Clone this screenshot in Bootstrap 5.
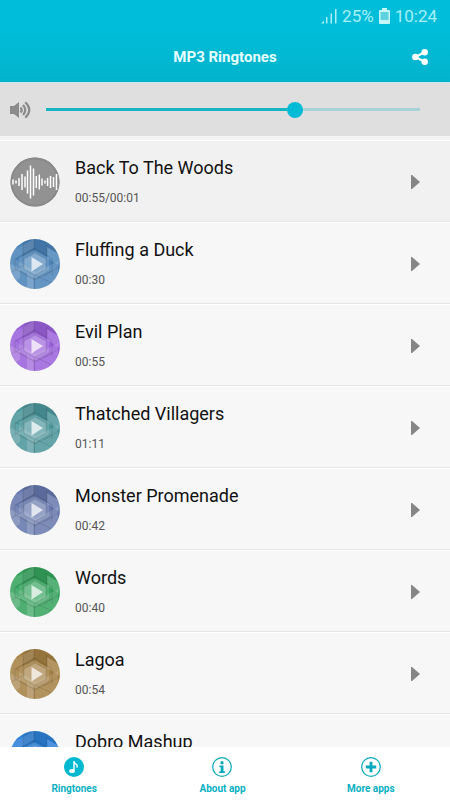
<!DOCTYPE html>
<html lang="en">
<head>
<meta charset="utf-8">
<meta name="viewport" content="width=device-width, initial-scale=1">
<title>MP3 Ringtones</title>
<link href="https://cdn.jsdelivr.net/npm/bootstrap@5.3.0/dist/css/bootstrap.min.css" rel="stylesheet">
<style>
  body { font-family: Roboto, "Liberation Sans", sans-serif; background: #f7f7f7; }
  .app-top { background: linear-gradient(#00bed9 30%, #03b3cc); color: #fff; border-bottom: 1px solid #c4e6ec; }
  .status { height: 32px; font-size: 17px; line-height: 32px; color: #a9f0f7; padding-right: 13px; gap: 5px; }
  .title-bar { height: 50px; }
  .title-bar h1 { font-size: 15px; line-height: 20px; font-weight: 700; color: #e6ffff; }
  .side { width: 60px; }
  .volume { background: #dfdfdf; height: 53px; padding: 0 30px 0 10px; gap: 14px; }
  .volume-range { appearance: none; -webkit-appearance: none; height: 16px; background: linear-gradient(to right, #17b4c4 66.6%, #a9d3d8 66.6%) center / 100% 3px no-repeat; }
  .volume-range::-webkit-slider-thumb { -webkit-appearance: none; width: 16px; height: 16px; border: 0; border-radius: 50%; background: #00bbd6; }
  .volume-range::-moz-range-thumb { width: 16px; height: 16px; border: 0; border-radius: 50%; background: #00bbd6; }
  .tracks { border-top: 4px solid #f3f3f3; scrollbar-width: none; }
  .track { height: 82px; background: #f7f7f7; border-top: 1px solid #fff; border-bottom: 1px solid #e6e6e6; padding: 2px 22px 0 10px; gap: 15px; }
  .track.playing { background: #f1f1f1; }
  .track h2 { font-size: 18px; line-height: 24px; font-weight: 400; color: #111; margin: 0 0 8px; }
  .track time { font-size: 12px; line-height: 20px; color: #555; }
  .play-btn { color: #868686; line-height: 0; border: 0; padding: 8px; }
  .blue { color: #4a83b8; } .violet { color: #9a61db; } .teal { color: #4b969b; } .indigo { color: #6577ac; }
  .green { color: #35a35d; } .gold { color: #a58144; } .azure { color: #2d80d8; }
  .tabs { background: #fff; height: 53px; padding-right: 5px; }
  .tabs a { color: #08b0c3; font-size: 10px; line-height: 14px; font-weight: 700; padding-top: 10px; gap: 5px; }
</style>
<script src="https://cdn.jsdelivr.net/npm/bootstrap@5.3.0/dist/js/bootstrap.bundle.min.js"></script>
</head>
<body class="vh-100 d-flex flex-column overflow-hidden">
<svg class="d-none" aria-hidden="true">
  <symbol id="art" viewBox="0 0 50 50">
      <path fill="currentColor" d="M0 0h50v50H0z"/>
      <path fill="#000" fill-opacity=".1" d="M13 0h37v16L37 8v10l-12-6-12 6z"/>
      <path fill="#fff" fill-opacity=".13" d="M0 13 24 0v9L5 20l20 13-1 17H0z"/>
      <path fill="#fff" fill-opacity=".15" d="m25 34 23-12v28H25z"/>
      <path fill="#fff" fill-opacity=".16" d="M37 8 50 16v11L37 19zM0 24l10 6v9L0 44zM17 34l7 4v12h-7z"/>
      <path fill="#fff" fill-opacity=".14" d="m24 11 15 8v13l-14 8-16-9V19z"/>
      <path fill="#fff" fill-opacity=".2" d="m25 14 11 6v10l-11 6-11-6V20z"/>
      <path fill="none" stroke="#000" stroke-opacity=".14" stroke-width=".8" d="M13 6v16M37 6v13M24 0v13M5 20l20-11 17 11v16M5 20v10l20 11 17-9M0 34l14-8M24 37v13M25 36l25 12M9 31l16 9 15-9M14 20l11-6 11 6v10l-11 6-11-6zM34 37l16-10"/>
      <path fill="#fff" fill-opacity=".72" d="M21.500 18v14.500L33 25z"/>
  </symbol>
  <symbol id="play" viewBox="0 0 9 14"><path fill="currentColor" d="M0 0h1l8 7-8 7H0z"/></symbol>
</svg>

<header class="app-top flex-shrink-0">
  <div class="status d-flex justify-content-end align-items-center">
    <svg width="16" height="16" viewBox="0 0 16 16" fill="currentColor" aria-label="Signal"><path d="M0 15.500 3 12.500v3zM5 9h1.500v6.500H5zM9.500 5.500H11v10H9.500zM14 1h1.500v14.500H14z"/></svg>
    <span>25%</span>
    <svg width="11" height="16" viewBox="0 0 11 16" aria-label="Battery"><path fill="#c5f7fa" d="M3 0h5v2h2q1 0 1 1v12q0 1-1 1H1q-1 0-1-1V3q0-1 1-1h2z"/><path fill="#5fd2df" d="M1.500 4h8v8h-8z"/></svg>
    <span>10:24</span>
  </div>
  <div class="title-bar d-flex align-items-center justify-content-between">
    <span class="side"></span>
    <h1 class="m-0">MP3 Ringtones</h1>
    <button type="button" class="btn border-0 p-0 side text-white lh-1" aria-label="Share">
      <svg width="16" height="16" viewBox="0 0 16 16" fill="currentColor"><path stroke="currentColor" stroke-width="2" fill="none" d="M12.800 3 3.500 8l9.300 5"/><circle cx="3.300" cy="8" r="3.200"/><circle cx="12.700" cy="3.300" r="3.200"/><circle cx="12.700" cy="12.700" r="3.200"/></svg>
    </button>
  </div>
</header>

<section class="volume d-flex align-items-center flex-shrink-0">
  <label for="vol" class="lh-1" aria-label="Volume">
    <svg width="22" height="18" viewBox="0 0 22 18"><path fill="#8b8b8b" d="M0 5h4l5-4v16l-5-4H0z"/><path fill="none" stroke="#8b8b8b" stroke-width="2.200" d="M10.500 6.500q2.500 2.500 0 5M13 4q4.500 5 0 10M15.300 1.300q8 7.700 0 15.400"/></svg>
  </label>
  <input id="vol" class="volume-range flex-fill" type="range" min="0" max="100" step="any" value="67.3">
</section>

<main class="tracks flex-fill overflow-auto">
  <ul class="list-unstyled m-0">
    <li class="track playing d-flex align-items-center">
      <svg width="50" height="50" viewBox="0 0 50 50"><circle cx="25" cy="25" r="24.500" fill="#929292"/><circle cx="25" cy="25" r="23.500" fill="none" stroke="#8a8a8a" stroke-width="2"/><path stroke="#fff" stroke-width="1.500" d="M3 22.500v5M6 23.500v3M9 21v8M12 17v16M15 19.500v11M17.500 13.500v23M20.500 8.500v33M23.500 11.500v27M26.300 19v12M29.300 17.500v15M32 21.500v7M35 23.500v3M37.600 21v8M40.500 19v12M43.500 20v10M46.500 17v16"/></svg>
      <div class="flex-fill"><h2>Back To The Woods</h2><time class="d-block">00:55/00:01</time></div>
      <button type="button" class="btn play-btn" aria-label="Play Back To The Woods"><svg width="9" height="14"><use href="#play"/></svg></button>
    </li>
    <li class="track d-flex align-items-center">
      <svg class="blue rounded-circle" width="50" height="50"><use href="#art"/></svg>
      <div class="flex-fill"><h2>Fluffing a Duck</h2><time class="d-block">00:30</time></div>
      <button type="button" class="btn play-btn" aria-label="Play Fluffing a Duck"><svg width="9" height="14"><use href="#play"/></svg></button>
    </li>
    <li class="track d-flex align-items-center">
      <svg class="violet rounded-circle" width="50" height="50"><use href="#art"/></svg>
      <div class="flex-fill"><h2>Evil Plan</h2><time class="d-block">00:55</time></div>
      <button type="button" class="btn play-btn" aria-label="Play Evil Plan"><svg width="9" height="14"><use href="#play"/></svg></button>
    </li>
    <li class="track d-flex align-items-center">
      <svg class="teal rounded-circle" width="50" height="50"><use href="#art"/></svg>
      <div class="flex-fill"><h2>Thatched Villagers</h2><time class="d-block">01:11</time></div>
      <button type="button" class="btn play-btn" aria-label="Play Thatched Villagers"><svg width="9" height="14"><use href="#play"/></svg></button>
    </li>
    <li class="track d-flex align-items-center">
      <svg class="indigo rounded-circle" width="50" height="50"><use href="#art"/></svg>
      <div class="flex-fill"><h2>Monster Promenade</h2><time class="d-block">00:42</time></div>
      <button type="button" class="btn play-btn" aria-label="Play Monster Promenade"><svg width="9" height="14"><use href="#play"/></svg></button>
    </li>
    <li class="track d-flex align-items-center">
      <svg class="green rounded-circle" width="50" height="50"><use href="#art"/></svg>
      <div class="flex-fill"><h2>Words</h2><time class="d-block">00:40</time></div>
      <button type="button" class="btn play-btn" aria-label="Play Words"><svg width="9" height="14"><use href="#play"/></svg></button>
    </li>
    <li class="track d-flex align-items-center">
      <svg class="gold rounded-circle" width="50" height="50"><use href="#art"/></svg>
      <div class="flex-fill"><h2>Lagoa</h2><time class="d-block">00:54</time></div>
      <button type="button" class="btn play-btn" aria-label="Play Lagoa"><svg width="9" height="14"><use href="#play"/></svg></button>
    </li>
    <li class="track d-flex align-items-center">
      <svg class="azure rounded-circle" width="50" height="50"><use href="#art"/></svg>
      <div class="flex-fill"><h2>Dobro Mashup</h2><time class="d-block">&nbsp;</time></div>
      <button type="button" class="btn play-btn" aria-label="Play Dobro Mashup"><svg width="9" height="14"><use href="#play"/></svg></button>
    </li>
  </ul>
</main>

<nav class="tabs d-flex flex-shrink-0" aria-label="Main">
  <a href="#ringtones" class="col d-flex flex-column align-items-center text-decoration-none" aria-current="page">
    <svg width="20" height="20" viewBox="0 0 20 20"><circle cx="10" cy="10" r="10" fill="#00b8d0"/><path d="M10 14V4q0 2 2 3.200 2 1.300.6 3.300" fill="none" stroke="#fff" stroke-width="1.400"/><ellipse cx="8" cy="14" rx="2.800" ry="2.100" fill="#fff"/></svg>
    <span>Ringtones</span>
  </a>
  <a href="#about" class="col d-flex flex-column align-items-center text-decoration-none">
    <svg width="20" height="20" viewBox="0 0 20 20" fill="#08a9bd"><circle cx="10" cy="10" r="9.300" fill="none" stroke="#08a9bd" stroke-width="1.200"/><circle cx="10" cy="5.800" r="1.700"/><path d="M7.500 8.500h4v5.700h1.300V16H7.300v-1.800h1.400v-4H7.500z"/></svg>
    <span>About app</span>
  </a>
  <a href="#more" class="col d-flex flex-column align-items-center text-decoration-none">
    <svg width="20" height="20" viewBox="0 0 20 20"><circle cx="10" cy="10" r="9.300" fill="none" stroke="#08a9bd" stroke-width="1.200"/><path d="M10 4.800v10.400M4.800 10h10.400" stroke="#08a9bd" stroke-width="2.800"/></svg>
    <span>More apps</span>
  </a>
</nav>
</body>
</html>
